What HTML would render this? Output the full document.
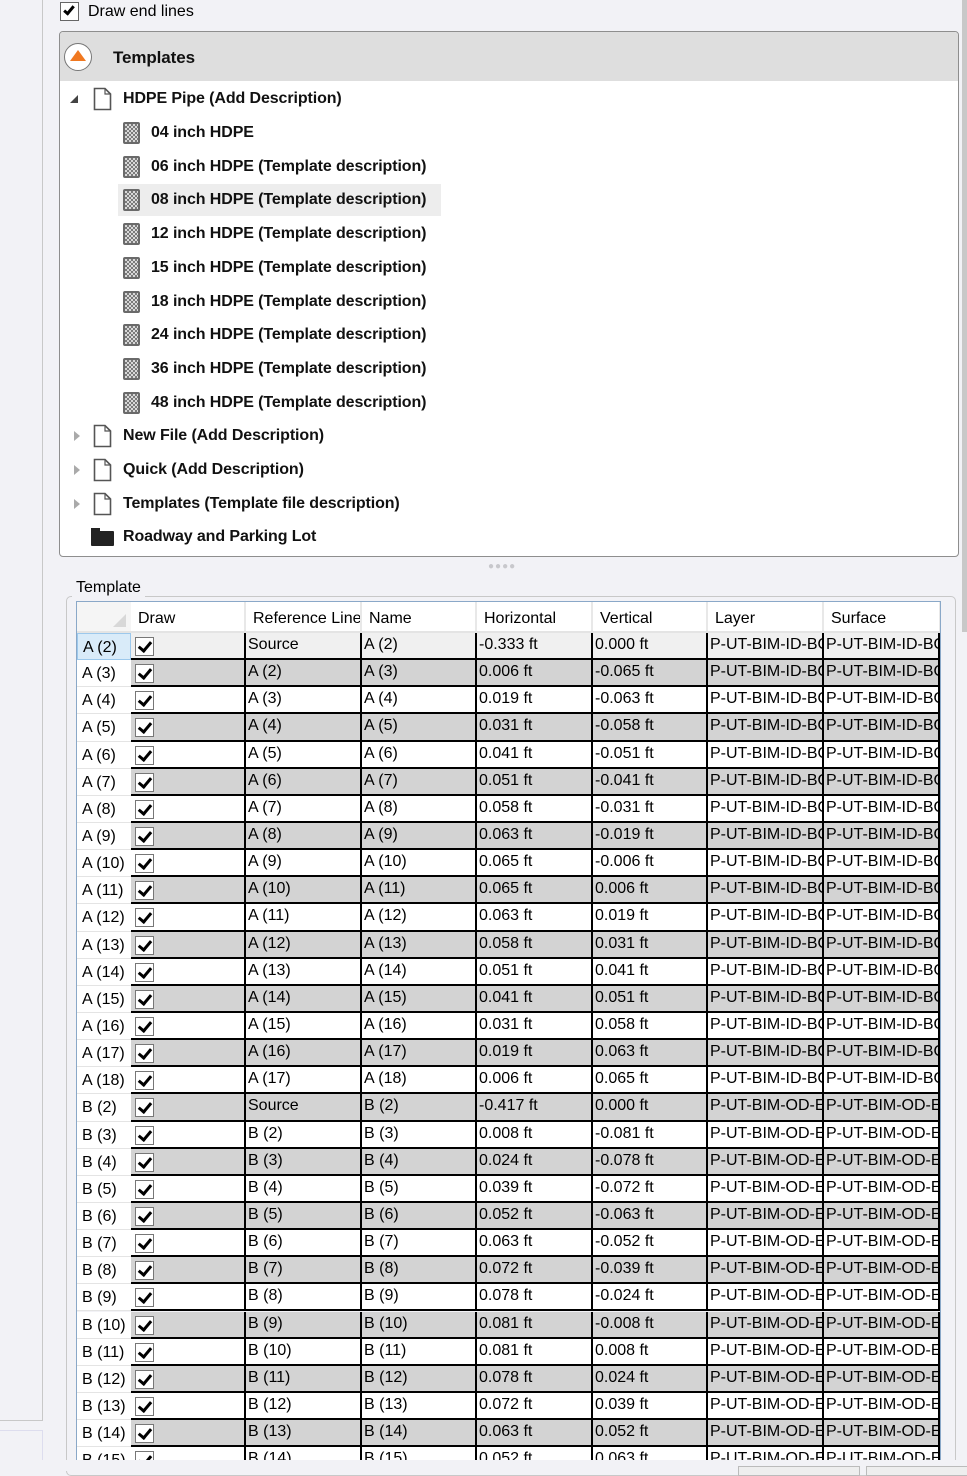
<!DOCTYPE html><html><head><meta charset="utf-8"><style>
*{box-sizing:border-box;margin:0;padding:0}
body{width:967px;height:1471px;background:#f2f2f6;font-family:"Liberation Sans",sans-serif;position:relative;overflow:hidden;color:#000}
.abs{position:absolute}
.ti{position:absolute;font-size:16px;font-weight:bold;letter-spacing:-0.1px;white-space:nowrap;color:#111}
.doc{position:absolute;width:19px;height:24px}
.tmp{position:absolute;width:17px;height:22px;background:repeating-conic-gradient(#7a7a7a 0 25%,#d8d8d8 0 50%) 0 0/4px 4px;border:2px solid #6a6a6a;border-radius:2px}
.row{position:absolute;left:77px;height:27.14px;width:863px;font-size:16px}
.c{position:absolute;top:0;height:100%;border-right:2px solid #000;border-bottom:2px solid #000;padding:1px 1px 0 2px;overflow:hidden;white-space:nowrap;line-height:22px}
.rh{position:absolute;left:0;width:54px;height:100%;background:#fff;border-bottom:1px solid #e4e4e4;padding:5px 0 0 5px;font-size:16px}
.cb{position:absolute;left:4px;top:4px;width:19px;height:19px;border:1.5px solid #777;background:#fff}
.cb:after{content:"";position:absolute;left:5px;top:1px;width:5px;height:10px;border:solid #000;border-width:0 3px 3px 0;transform:rotate(40deg)}
.hd{position:absolute;top:0;height:31px;background:#fff;border-right:2px solid #e8e8e8;border-bottom:2px solid #e4e4e4;font-size:16px;padding:8px 0 0 7px;white-space:nowrap;overflow:hidden}
.g .c{background:#d3d3d3}.w .c{background:#fff}
</style></head><body>
<div class="abs" style="left:0;top:0;width:43px;height:1420px;border-right:1px solid #c8c8c8;background:#f2f2f6"></div>
<div class="abs" style="left:0;top:1420px;width:43px;height:1px;background:#c8c8c8"></div>
<div class="abs" style="left:0;top:1430px;width:43px;height:41px;border-top:1px solid #dde;border-right:1px solid #dde"></div>
<div class="abs" style="left:962px;top:0;width:5px;height:632px;background:#c8c8c8"></div>
<div class="abs" style="left:60px;top:2px;width:19px;height:19px;border:1.5px solid #666;background:#fff"></div>
<div class="abs" style="left:66px;top:4px;width:6px;height:11px;border:solid #000;border-width:0 3px 3px 0;transform:rotate(40deg)"></div>
<div class="abs" style="left:88px;top:3px;font-size:16px">Draw end lines</div>

<div class="abs" style="left:59px;top:31px;width:900px;height:526px;border:1.5px solid #8e8e8e;border-radius:4px;background:#fff;overflow:hidden">
<div class="abs" style="left:0;top:0;width:100%;height:49px;background:#dedede"></div>
<div class="abs" style="left:4px;top:11px;width:28px;height:28px;border:1.5px solid #777;border-radius:50%;background:#fff"></div>
<div class="abs" style="left:10px;top:18px;width:0;height:0;border-left:8px solid transparent;border-right:8px solid transparent;border-bottom:11px solid #f07820"></div>
<div class="ti" style="left:53px;top:16px;font-size:17px">Templates</div>
</div>
<svg width="0" height="0" style="position:absolute"><defs><symbol id="d" viewBox="0 0 19 24"><path d="M1.5 1.5H12L17.5 7V22.5H1.5Z" fill="#fff" stroke="#555" stroke-width="1.6"/><path d="M12 1.5V7H17.5" fill="none" stroke="#555" stroke-width="1.2"/></symbol></defs></svg>
<div class="abs" style="left:70px;top:95px;width:0;height:0;border-left:8px solid transparent;border-bottom:8px solid #444"></div>
<svg class="doc" style="left:93px;top:87px"><use href="#d"/></svg><div class="ti" style="left:123px;top:90px">HDPE Pipe (Add Description)</div>
<div class="abs" style="left:118px;top:184px;width:323px;height:32px;background:#ededed"></div>
<div class="tmp" style="left:123px;top:122px"></div><div class="ti" style="left:151px;top:124px">04 inch HDPE</div>
<div class="tmp" style="left:123px;top:156px"></div><div class="ti" style="left:151px;top:158px">06 inch HDPE (Template description)</div>
<div class="tmp" style="left:123px;top:189px"></div><div class="ti" style="left:151px;top:191px">08 inch HDPE (Template description)</div>
<div class="tmp" style="left:123px;top:223px"></div><div class="ti" style="left:151px;top:225px">12 inch HDPE (Template description)</div>
<div class="tmp" style="left:123px;top:257px"></div><div class="ti" style="left:151px;top:259px">15 inch HDPE (Template description)</div>
<div class="tmp" style="left:123px;top:291px"></div><div class="ti" style="left:151px;top:293px">18 inch HDPE (Template description)</div>
<div class="tmp" style="left:123px;top:324px"></div><div class="ti" style="left:151px;top:326px">24 inch HDPE (Template description)</div>
<div class="tmp" style="left:123px;top:358px"></div><div class="ti" style="left:151px;top:360px">36 inch HDPE (Template description)</div>
<div class="tmp" style="left:123px;top:392px"></div><div class="ti" style="left:151px;top:394px">48 inch HDPE (Template description)</div>
<div class="abs" style="left:74px;top:431px;width:0;height:0;border-top:5px solid transparent;border-bottom:5px solid transparent;border-left:6px solid #aaa"></div>
<svg class="doc" style="left:93px;top:424px"><use href="#d"/></svg><div class="ti" style="left:123px;top:427px">New File (Add Description)</div>
<div class="abs" style="left:74px;top:465px;width:0;height:0;border-top:5px solid transparent;border-bottom:5px solid transparent;border-left:6px solid #aaa"></div>
<svg class="doc" style="left:93px;top:458px"><use href="#d"/></svg><div class="ti" style="left:123px;top:461px">Quick (Add Description)</div>
<div class="abs" style="left:74px;top:499px;width:0;height:0;border-top:5px solid transparent;border-bottom:5px solid transparent;border-left:6px solid #aaa"></div>
<svg class="doc" style="left:93px;top:492px"><use href="#d"/></svg><div class="ti" style="left:123px;top:495px">Templates (Template file description)</div>
<div class="abs" style="left:91px;top:531px;width:23px;height:15px;background:#222;border-radius:1px"></div>
<div class="abs" style="left:91px;top:528px;width:9px;height:4px;background:#222"></div>
<div class="ti" style="left:123px;top:528px">Roadway and Parking Lot</div>

<div class="abs" style="left:488px;top:561px;font-size:10px;color:#c8c8cc;letter-spacing:1px">●●●●</div>

<div class="abs" style="left:66px;top:596px;width:890px;height:880px;border:1px solid #c8c8c8;border-radius:5px"></div>
<div class="abs" style="left:72px;top:579px;background:#f2f2f6;padding:0 4px;font-size:16px">Template</div>

<div class="abs" style="left:76px;top:601px;width:865px;height:859px;border:1px solid #8aa8c8;overflow:hidden;background:#f2f2f6">
<div class="abs" style="left:0;top:0;width:54px;height:31px;background:#f5f5f5;border-bottom:2px solid #e4e4e4"></div>
<div class="abs" style="left:36px;top:12px;width:0;height:0;border-left:13px solid transparent;border-bottom:13px solid #d8d8d8"></div>
<div class="hd" style="left:54px;width:115px">Draw</div>
<div class="hd" style="left:169px;width:116px">Reference Line</div>
<div class="hd" style="left:285px;width:115px">Name</div>
<div class="hd" style="left:400px;width:116px">Horizontal</div>
<div class="hd" style="left:516px;width:115px">Vertical</div>
<div class="hd" style="left:631px;width:116px">Layer</div>
<div class="hd" style="left:747px;width:117px">Surface</div>
</div>

<div style="position:absolute;left:0;top:0;height:1460px;width:967px;overflow:hidden">
<div class="row" style="top:633px"><div class="rh" style="background:#d9ebf9;border:1px solid #9cc8ec">A (2)</div><div class="c" style="left:54px;width:115px;background:#f0f0f0"><div class="cb"></div></div><div class="c" style="left:169px;width:116px;background:#f0f0f0">Source</div><div class="c" style="left:285px;width:115px;background:#f0f0f0">A (2)</div><div class="c" style="left:400px;width:116px;background:#f0f0f0">-0.333 ft</div><div class="c" style="left:516px;width:115px;background:#f0f0f0">0.000 ft</div><div class="c" style="left:631px;width:116px;background:#f0f0f0">P-UT-BIM-ID-BOT</div><div class="c" style="left:747px;width:116px;background:#f0f0f0">P-UT-BIM-ID-BOT</div></div>
<div class="row g" style="top:660.14px"><div class="rh">A (3)</div><div class="c" style="left:54px;width:115px"><div class="cb"></div></div><div class="c" style="left:169px;width:116px">A (2)</div><div class="c" style="left:285px;width:115px">A (3)</div><div class="c" style="left:400px;width:116px">0.006 ft</div><div class="c" style="left:516px;width:115px">-0.065 ft</div><div class="c" style="left:631px;width:116px">P-UT-BIM-ID-BOT</div><div class="c" style="left:747px;width:116px">P-UT-BIM-ID-BOT</div></div>
<div class="row w" style="top:687.28px"><div class="rh">A (4)</div><div class="c" style="left:54px;width:115px"><div class="cb"></div></div><div class="c" style="left:169px;width:116px">A (3)</div><div class="c" style="left:285px;width:115px">A (4)</div><div class="c" style="left:400px;width:116px">0.019 ft</div><div class="c" style="left:516px;width:115px">-0.063 ft</div><div class="c" style="left:631px;width:116px">P-UT-BIM-ID-BOT</div><div class="c" style="left:747px;width:116px">P-UT-BIM-ID-BOT</div></div>
<div class="row g" style="top:714.42px"><div class="rh">A (5)</div><div class="c" style="left:54px;width:115px"><div class="cb"></div></div><div class="c" style="left:169px;width:116px">A (4)</div><div class="c" style="left:285px;width:115px">A (5)</div><div class="c" style="left:400px;width:116px">0.031 ft</div><div class="c" style="left:516px;width:115px">-0.058 ft</div><div class="c" style="left:631px;width:116px">P-UT-BIM-ID-BOT</div><div class="c" style="left:747px;width:116px">P-UT-BIM-ID-BOT</div></div>
<div class="row w" style="top:741.56px"><div class="rh">A (6)</div><div class="c" style="left:54px;width:115px"><div class="cb"></div></div><div class="c" style="left:169px;width:116px">A (5)</div><div class="c" style="left:285px;width:115px">A (6)</div><div class="c" style="left:400px;width:116px">0.041 ft</div><div class="c" style="left:516px;width:115px">-0.051 ft</div><div class="c" style="left:631px;width:116px">P-UT-BIM-ID-BOT</div><div class="c" style="left:747px;width:116px">P-UT-BIM-ID-BOT</div></div>
<div class="row g" style="top:768.7px"><div class="rh">A (7)</div><div class="c" style="left:54px;width:115px"><div class="cb"></div></div><div class="c" style="left:169px;width:116px">A (6)</div><div class="c" style="left:285px;width:115px">A (7)</div><div class="c" style="left:400px;width:116px">0.051 ft</div><div class="c" style="left:516px;width:115px">-0.041 ft</div><div class="c" style="left:631px;width:116px">P-UT-BIM-ID-BOT</div><div class="c" style="left:747px;width:116px">P-UT-BIM-ID-BOT</div></div>
<div class="row w" style="top:795.84px"><div class="rh">A (8)</div><div class="c" style="left:54px;width:115px"><div class="cb"></div></div><div class="c" style="left:169px;width:116px">A (7)</div><div class="c" style="left:285px;width:115px">A (8)</div><div class="c" style="left:400px;width:116px">0.058 ft</div><div class="c" style="left:516px;width:115px">-0.031 ft</div><div class="c" style="left:631px;width:116px">P-UT-BIM-ID-BOT</div><div class="c" style="left:747px;width:116px">P-UT-BIM-ID-BOT</div></div>
<div class="row g" style="top:822.98px"><div class="rh">A (9)</div><div class="c" style="left:54px;width:115px"><div class="cb"></div></div><div class="c" style="left:169px;width:116px">A (8)</div><div class="c" style="left:285px;width:115px">A (9)</div><div class="c" style="left:400px;width:116px">0.063 ft</div><div class="c" style="left:516px;width:115px">-0.019 ft</div><div class="c" style="left:631px;width:116px">P-UT-BIM-ID-BOT</div><div class="c" style="left:747px;width:116px">P-UT-BIM-ID-BOT</div></div>
<div class="row w" style="top:850.12px"><div class="rh">A (10)</div><div class="c" style="left:54px;width:115px"><div class="cb"></div></div><div class="c" style="left:169px;width:116px">A (9)</div><div class="c" style="left:285px;width:115px">A (10)</div><div class="c" style="left:400px;width:116px">0.065 ft</div><div class="c" style="left:516px;width:115px">-0.006 ft</div><div class="c" style="left:631px;width:116px">P-UT-BIM-ID-BOT</div><div class="c" style="left:747px;width:116px">P-UT-BIM-ID-BOT</div></div>
<div class="row g" style="top:877.26px"><div class="rh">A (11)</div><div class="c" style="left:54px;width:115px"><div class="cb"></div></div><div class="c" style="left:169px;width:116px">A (10)</div><div class="c" style="left:285px;width:115px">A (11)</div><div class="c" style="left:400px;width:116px">0.065 ft</div><div class="c" style="left:516px;width:115px">0.006 ft</div><div class="c" style="left:631px;width:116px">P-UT-BIM-ID-BOT</div><div class="c" style="left:747px;width:116px">P-UT-BIM-ID-BOT</div></div>
<div class="row w" style="top:904.4px"><div class="rh">A (12)</div><div class="c" style="left:54px;width:115px"><div class="cb"></div></div><div class="c" style="left:169px;width:116px">A (11)</div><div class="c" style="left:285px;width:115px">A (12)</div><div class="c" style="left:400px;width:116px">0.063 ft</div><div class="c" style="left:516px;width:115px">0.019 ft</div><div class="c" style="left:631px;width:116px">P-UT-BIM-ID-BOT</div><div class="c" style="left:747px;width:116px">P-UT-BIM-ID-BOT</div></div>
<div class="row g" style="top:931.54px"><div class="rh">A (13)</div><div class="c" style="left:54px;width:115px"><div class="cb"></div></div><div class="c" style="left:169px;width:116px">A (12)</div><div class="c" style="left:285px;width:115px">A (13)</div><div class="c" style="left:400px;width:116px">0.058 ft</div><div class="c" style="left:516px;width:115px">0.031 ft</div><div class="c" style="left:631px;width:116px">P-UT-BIM-ID-BOT</div><div class="c" style="left:747px;width:116px">P-UT-BIM-ID-BOT</div></div>
<div class="row w" style="top:958.68px"><div class="rh">A (14)</div><div class="c" style="left:54px;width:115px"><div class="cb"></div></div><div class="c" style="left:169px;width:116px">A (13)</div><div class="c" style="left:285px;width:115px">A (14)</div><div class="c" style="left:400px;width:116px">0.051 ft</div><div class="c" style="left:516px;width:115px">0.041 ft</div><div class="c" style="left:631px;width:116px">P-UT-BIM-ID-BOT</div><div class="c" style="left:747px;width:116px">P-UT-BIM-ID-BOT</div></div>
<div class="row g" style="top:985.82px"><div class="rh">A (15)</div><div class="c" style="left:54px;width:115px"><div class="cb"></div></div><div class="c" style="left:169px;width:116px">A (14)</div><div class="c" style="left:285px;width:115px">A (15)</div><div class="c" style="left:400px;width:116px">0.041 ft</div><div class="c" style="left:516px;width:115px">0.051 ft</div><div class="c" style="left:631px;width:116px">P-UT-BIM-ID-BOT</div><div class="c" style="left:747px;width:116px">P-UT-BIM-ID-BOT</div></div>
<div class="row w" style="top:1012.96px"><div class="rh">A (16)</div><div class="c" style="left:54px;width:115px"><div class="cb"></div></div><div class="c" style="left:169px;width:116px">A (15)</div><div class="c" style="left:285px;width:115px">A (16)</div><div class="c" style="left:400px;width:116px">0.031 ft</div><div class="c" style="left:516px;width:115px">0.058 ft</div><div class="c" style="left:631px;width:116px">P-UT-BIM-ID-BOT</div><div class="c" style="left:747px;width:116px">P-UT-BIM-ID-BOT</div></div>
<div class="row g" style="top:1040.1px"><div class="rh">A (17)</div><div class="c" style="left:54px;width:115px"><div class="cb"></div></div><div class="c" style="left:169px;width:116px">A (16)</div><div class="c" style="left:285px;width:115px">A (17)</div><div class="c" style="left:400px;width:116px">0.019 ft</div><div class="c" style="left:516px;width:115px">0.063 ft</div><div class="c" style="left:631px;width:116px">P-UT-BIM-ID-BOT</div><div class="c" style="left:747px;width:116px">P-UT-BIM-ID-BOT</div></div>
<div class="row w" style="top:1067.24px"><div class="rh">A (18)</div><div class="c" style="left:54px;width:115px"><div class="cb"></div></div><div class="c" style="left:169px;width:116px">A (17)</div><div class="c" style="left:285px;width:115px">A (18)</div><div class="c" style="left:400px;width:116px">0.006 ft</div><div class="c" style="left:516px;width:115px">0.065 ft</div><div class="c" style="left:631px;width:116px">P-UT-BIM-ID-BOT</div><div class="c" style="left:747px;width:116px">P-UT-BIM-ID-BOT</div></div>
<div class="row g" style="top:1094.38px"><div class="rh">B (2)</div><div class="c" style="left:54px;width:115px"><div class="cb"></div></div><div class="c" style="left:169px;width:116px">Source</div><div class="c" style="left:285px;width:115px">B (2)</div><div class="c" style="left:400px;width:116px">-0.417 ft</div><div class="c" style="left:516px;width:115px">0.000 ft</div><div class="c" style="left:631px;width:116px">P-UT-BIM-OD-EDGE</div><div class="c" style="left:747px;width:116px">P-UT-BIM-OD-EDGE</div></div>
<div class="row w" style="top:1121.52px"><div class="rh">B (3)</div><div class="c" style="left:54px;width:115px"><div class="cb"></div></div><div class="c" style="left:169px;width:116px">B (2)</div><div class="c" style="left:285px;width:115px">B (3)</div><div class="c" style="left:400px;width:116px">0.008 ft</div><div class="c" style="left:516px;width:115px">-0.081 ft</div><div class="c" style="left:631px;width:116px">P-UT-BIM-OD-EDGE</div><div class="c" style="left:747px;width:116px">P-UT-BIM-OD-EDGE</div></div>
<div class="row g" style="top:1148.66px"><div class="rh">B (4)</div><div class="c" style="left:54px;width:115px"><div class="cb"></div></div><div class="c" style="left:169px;width:116px">B (3)</div><div class="c" style="left:285px;width:115px">B (4)</div><div class="c" style="left:400px;width:116px">0.024 ft</div><div class="c" style="left:516px;width:115px">-0.078 ft</div><div class="c" style="left:631px;width:116px">P-UT-BIM-OD-EDGE</div><div class="c" style="left:747px;width:116px">P-UT-BIM-OD-EDGE</div></div>
<div class="row w" style="top:1175.8px"><div class="rh">B (5)</div><div class="c" style="left:54px;width:115px"><div class="cb"></div></div><div class="c" style="left:169px;width:116px">B (4)</div><div class="c" style="left:285px;width:115px">B (5)</div><div class="c" style="left:400px;width:116px">0.039 ft</div><div class="c" style="left:516px;width:115px">-0.072 ft</div><div class="c" style="left:631px;width:116px">P-UT-BIM-OD-EDGE</div><div class="c" style="left:747px;width:116px">P-UT-BIM-OD-EDGE</div></div>
<div class="row g" style="top:1202.94px"><div class="rh">B (6)</div><div class="c" style="left:54px;width:115px"><div class="cb"></div></div><div class="c" style="left:169px;width:116px">B (5)</div><div class="c" style="left:285px;width:115px">B (6)</div><div class="c" style="left:400px;width:116px">0.052 ft</div><div class="c" style="left:516px;width:115px">-0.063 ft</div><div class="c" style="left:631px;width:116px">P-UT-BIM-OD-EDGE</div><div class="c" style="left:747px;width:116px">P-UT-BIM-OD-EDGE</div></div>
<div class="row w" style="top:1230.08px"><div class="rh">B (7)</div><div class="c" style="left:54px;width:115px"><div class="cb"></div></div><div class="c" style="left:169px;width:116px">B (6)</div><div class="c" style="left:285px;width:115px">B (7)</div><div class="c" style="left:400px;width:116px">0.063 ft</div><div class="c" style="left:516px;width:115px">-0.052 ft</div><div class="c" style="left:631px;width:116px">P-UT-BIM-OD-EDGE</div><div class="c" style="left:747px;width:116px">P-UT-BIM-OD-EDGE</div></div>
<div class="row g" style="top:1257.22px"><div class="rh">B (8)</div><div class="c" style="left:54px;width:115px"><div class="cb"></div></div><div class="c" style="left:169px;width:116px">B (7)</div><div class="c" style="left:285px;width:115px">B (8)</div><div class="c" style="left:400px;width:116px">0.072 ft</div><div class="c" style="left:516px;width:115px">-0.039 ft</div><div class="c" style="left:631px;width:116px">P-UT-BIM-OD-EDGE</div><div class="c" style="left:747px;width:116px">P-UT-BIM-OD-EDGE</div></div>
<div class="row w" style="top:1284.36px"><div class="rh">B (9)</div><div class="c" style="left:54px;width:115px"><div class="cb"></div></div><div class="c" style="left:169px;width:116px">B (8)</div><div class="c" style="left:285px;width:115px">B (9)</div><div class="c" style="left:400px;width:116px">0.078 ft</div><div class="c" style="left:516px;width:115px">-0.024 ft</div><div class="c" style="left:631px;width:116px">P-UT-BIM-OD-EDGE</div><div class="c" style="left:747px;width:116px">P-UT-BIM-OD-EDGE</div></div>
<div class="row g" style="top:1311.5px"><div class="rh">B (10)</div><div class="c" style="left:54px;width:115px"><div class="cb"></div></div><div class="c" style="left:169px;width:116px">B (9)</div><div class="c" style="left:285px;width:115px">B (10)</div><div class="c" style="left:400px;width:116px">0.081 ft</div><div class="c" style="left:516px;width:115px">-0.008 ft</div><div class="c" style="left:631px;width:116px">P-UT-BIM-OD-EDGE</div><div class="c" style="left:747px;width:116px">P-UT-BIM-OD-EDGE</div></div>
<div class="row w" style="top:1338.64px"><div class="rh">B (11)</div><div class="c" style="left:54px;width:115px"><div class="cb"></div></div><div class="c" style="left:169px;width:116px">B (10)</div><div class="c" style="left:285px;width:115px">B (11)</div><div class="c" style="left:400px;width:116px">0.081 ft</div><div class="c" style="left:516px;width:115px">0.008 ft</div><div class="c" style="left:631px;width:116px">P-UT-BIM-OD-EDGE</div><div class="c" style="left:747px;width:116px">P-UT-BIM-OD-EDGE</div></div>
<div class="row g" style="top:1365.78px"><div class="rh">B (12)</div><div class="c" style="left:54px;width:115px"><div class="cb"></div></div><div class="c" style="left:169px;width:116px">B (11)</div><div class="c" style="left:285px;width:115px">B (12)</div><div class="c" style="left:400px;width:116px">0.078 ft</div><div class="c" style="left:516px;width:115px">0.024 ft</div><div class="c" style="left:631px;width:116px">P-UT-BIM-OD-EDGE</div><div class="c" style="left:747px;width:116px">P-UT-BIM-OD-EDGE</div></div>
<div class="row w" style="top:1392.92px"><div class="rh">B (13)</div><div class="c" style="left:54px;width:115px"><div class="cb"></div></div><div class="c" style="left:169px;width:116px">B (12)</div><div class="c" style="left:285px;width:115px">B (13)</div><div class="c" style="left:400px;width:116px">0.072 ft</div><div class="c" style="left:516px;width:115px">0.039 ft</div><div class="c" style="left:631px;width:116px">P-UT-BIM-OD-EDGE</div><div class="c" style="left:747px;width:116px">P-UT-BIM-OD-EDGE</div></div>
<div class="row g" style="top:1420.06px"><div class="rh">B (14)</div><div class="c" style="left:54px;width:115px"><div class="cb"></div></div><div class="c" style="left:169px;width:116px">B (13)</div><div class="c" style="left:285px;width:115px">B (14)</div><div class="c" style="left:400px;width:116px">0.063 ft</div><div class="c" style="left:516px;width:115px">0.052 ft</div><div class="c" style="left:631px;width:116px">P-UT-BIM-OD-EDGE</div><div class="c" style="left:747px;width:116px">P-UT-BIM-OD-EDGE</div></div>
<div class="row w" style="top:1447.2px"><div class="rh">B (15)</div><div class="c" style="left:54px;width:115px"><div class="cb"></div></div><div class="c" style="left:169px;width:116px">B (14)</div><div class="c" style="left:285px;width:115px">B (15)</div><div class="c" style="left:400px;width:116px">0.052 ft</div><div class="c" style="left:516px;width:115px">0.063 ft</div><div class="c" style="left:631px;width:116px">P-UT-BIM-OD-EDGE</div><div class="c" style="left:747px;width:116px">P-UT-BIM-OD-EDGE</div></div>
</div>
<div class="abs" style="left:0;top:1460px;width:967px;height:11px;background:#f2f2f6"></div>
<div class="abs" style="left:738px;top:1466px;width:122px;height:10px;border:1px solid #bbb;background:#eee"></div>
<div class="abs" style="left:866px;top:1466px;width:110px;height:10px;border:1px solid #bbb;background:#eee"></div>
</body></html>
